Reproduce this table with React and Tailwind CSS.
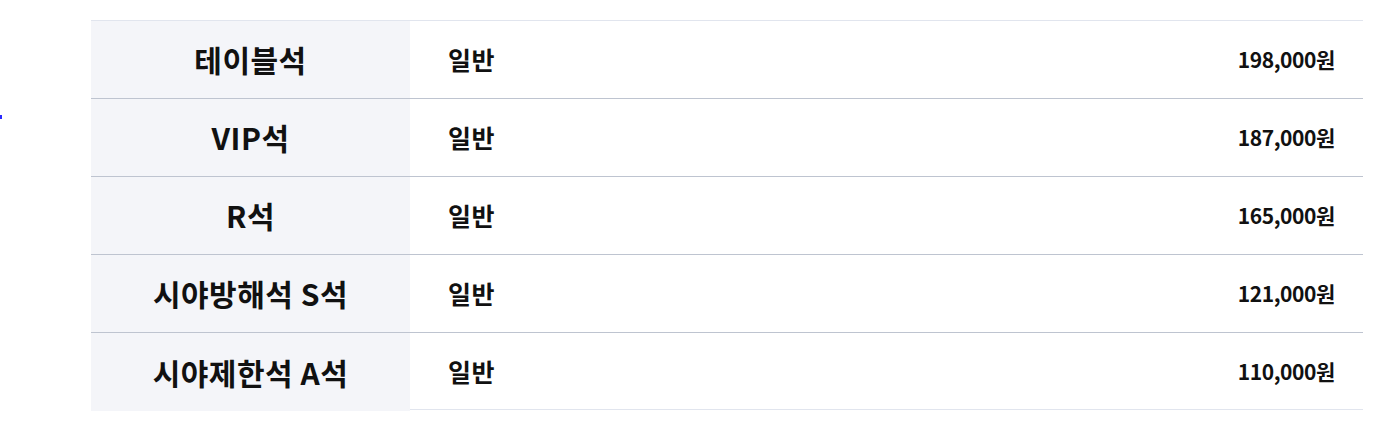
import React from 'react';

const rows = [
  { seat: '테이블석', type: '일반', price: '198,000원' },
  { seat: 'VIP석', type: '일반', price: '187,000원' },
  { seat: 'R석', type: '일반', price: '165,000원' },
  { seat: '시야방해석 S석', type: '일반', price: '121,000원' },
  { seat: '시야제한석 A석', type: '일반', price: '110,000원' },
];

export default function App() {
  return (
    <div
      className="flex bg-white w-[1373px] h-[431px]"
      style={{ fontFamily: '"Noto Sans CJK KR", "Noto Sans", sans-serif' }}
    >
      <div className="w-[91px] shrink-0 pt-[115px]">
        <div className="w-[2px] h-[4px] bg-[#2a2aff]" />
      </div>
      <div className="mt-[20px] w-[1272px] h-[390px] border-t border-b border-[#e1e5ee]">
        {rows.map((r, i) => (
          <div
            key={r.seat}
            className={
              'flex h-[78px] ' +
              (i < rows.length - 1 ? 'border-b border-[#bec4d0]' : '')
            }
          >
            <div className="w-[319px] shrink-0 bg-[#f4f5f9] flex items-center justify-center text-[30px] tracking-[0.5px] font-bold text-[#111]">
              {r.seat}
            </div>
            <div className="flex-1 flex items-center pl-[38px] text-[25px] tracking-[0.5px] font-bold text-[#111]">
              {r.type}
            </div>
            <div className="flex items-center pr-[28px] text-[21px] tracking-[-0.4px] font-bold text-[#111]">
              {r.price}
            </div>
          </div>
        ))}
      </div>
    </div>
  );
}
